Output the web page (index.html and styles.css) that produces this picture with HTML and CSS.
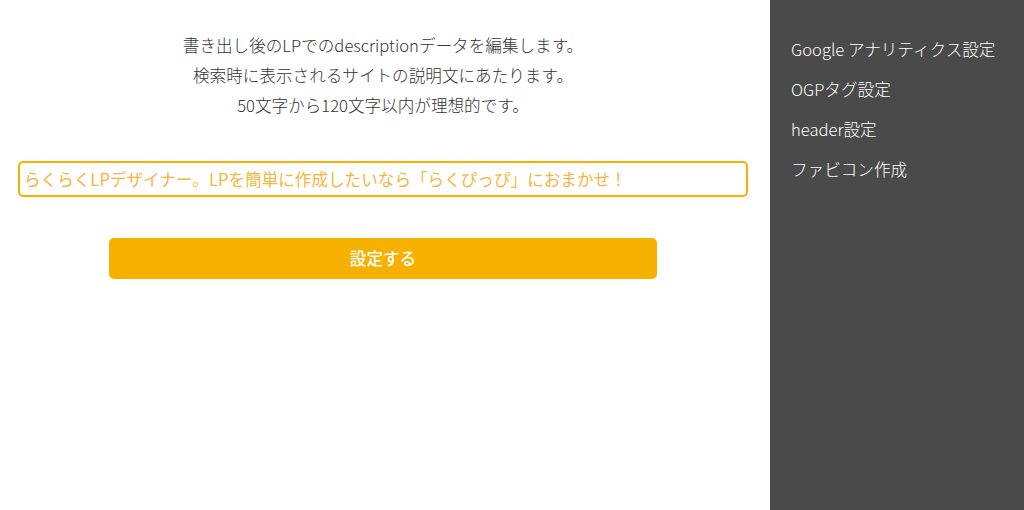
FILE: index.html
```html
<!DOCTYPE html>
<html lang="ja">
<head>
  <meta charset="UTF-8" />
  <meta name="viewport" content="width=device-width, initial-scale=1.0" />
  <title>description設定</title>
  <link rel="stylesheet" href="styles.css">
</head>
<body>
  <div class="layout">
    <main class="main">
      <div class="description">
        <p>書き出し後のLPでのdescriptionデータを編集します。</p>
        <p>検索時に表示されるサイトの説明文にあたります。</p>
        <p>50文字から120文字以内が理想的です。</p>
      </div>

      <input type="text" class="desc-input" value="らくらくLPデザイナー。LPを簡単に作成したいなら「らくぴっぴ」におまかせ！" />

      <div class="actions">
        <button class="submit-btn">設定する</button>
      </div>
    </main>

    <nav class="sidebar">
      <a href="#">Google アナリティクス設定</a>
      <a href="#">OGPタグ設定</a>
      <a href="#">header設定</a>
      <a href="#">ファビコン作成</a>
    </nav>
  </div>
</body>
</html>
```

FILE: styles.css
```css
body {
  font-family: 'Noto Sans CJK JP', 'Noto Sans', sans-serif;
  margin: 0;
  padding: 0;
  background: #fff;
  color: #333;
}

.layout {
  display: flex;
  height: 510px;
}

.main {
  width: 730px;
  padding: 30px 22px 0 18px;
}

.description {
  text-align: center;
  font-size: 16.6px;
  font-weight: 300;
  line-height: 30px;
}

.description p {
  margin: 0;
}

.desc-input {
  display: block;
  box-sizing: border-box;
  width: 100%;
  height: 36px;
  margin-top: 41px;
  padding: 0 4px;
  border: 2px solid #f5b000;
  border-radius: 5px;
  font-family: inherit;
  font-size: 16.6px;
  font-weight: 400;
  color: #f6b540;
  outline: none;
}

.actions {
  display: flex;
  justify-content: center;
  margin-top: 41px;
}

.submit-btn {
  width: 548px;
  height: 41px;
  padding-bottom: 2px;
  background-color: #f5b000;
  color: white;
  border: none;
  border-radius: 5px;
  font-family: inherit;
  font-size: 16.6px;
  font-weight: 500;
  cursor: pointer;
}

.sidebar {
  flex: 1;
  background: #4a4a4a;
  display: flex;
  flex-direction: column;
  padding: 29px 0 0 21px;
}

.sidebar a {
  color: #fff;
  text-decoration: none;
  font-size: 16.6px;
  font-weight: 300;
  line-height: 40px;
}
```
